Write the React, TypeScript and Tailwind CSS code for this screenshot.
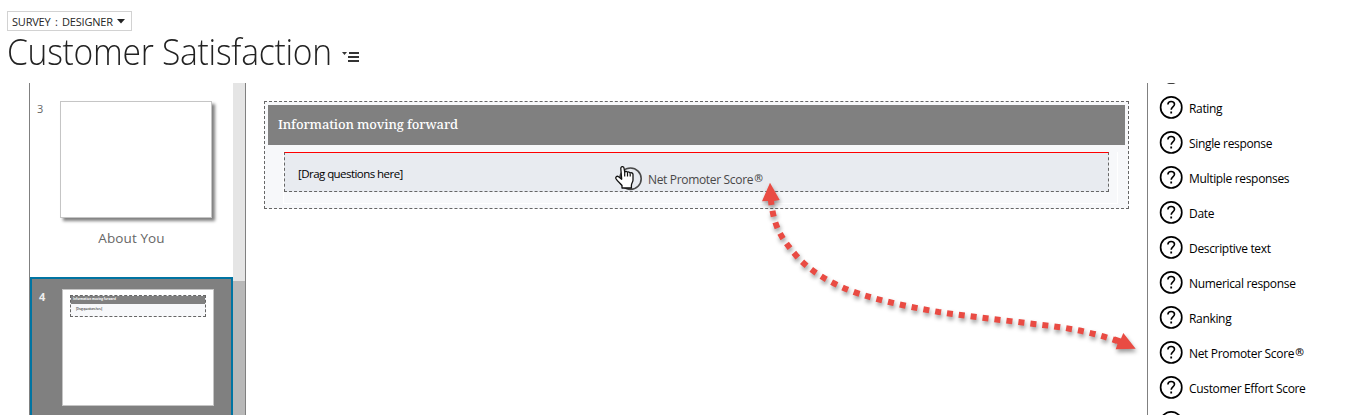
const questionTypes = [
  { name: 'Rating' },
  { name: 'Single response' },
  { name: 'Multiple responses' },
  { name: 'Date' },
  { name: 'Descriptive text' },
  { name: 'Numerical response' },
  { name: 'Ranking' },
  { name: 'Net Promoter Score', registered: true },
  { name: 'Customer Effort Score' },
];

function QuestionIcon() {
  return (
    <svg width="24" height="24" viewBox="0 0 24 24" fill="none" stroke="#000" className="shrink-0">
      <circle cx="12.2" cy="12.4" r="10.6" strokeWidth="1.7" />
      <path d="M8.900 9.500C9 7.500 10.200 6.500 12.100 6.500c2 0 3.400 1.100 3.400 2.800 0 2.500-3.300 2.800-3.300 5.400" strokeWidth="1.6" />
      <path d="M12.200 16.500v2" strokeWidth="1.8" />
    </svg>
  );
}

function Registered() {
  return <span className="relative -top-[1.5px] ml-[1px] text-[10.5px] leading-none font-semibold">®</span>;
}

function Header() {
  return (
    <header className="h-[83px] shrink-0 pl-[7px] pt-[11px]">
      <button className="flex h-5 w-[125px] items-center border border-[#d2d2d2] pl-[4px] text-[11px] text-[#262626]">
        <span className="mt-[2px] whitespace-nowrap tracking-[-0.2px] [word-spacing:1.8px]">SURVEY : DESIGNER</span>
        <svg width="8" height="5" viewBox="0 0 8 5" className="ml-[4px]">
          <path d="M0 0h8L4 4.5z" fill="#222" />
        </svg>
      </button>
      <div className="flex h-[42px] items-center">
        <h1 className="w-[324px] origin-left scale-x-[0.935] whitespace-nowrap text-[36px] leading-[42px] font-light tracking-[-0.3px] text-[#222]">
          Customer Satisfaction
        </h1>
        <svg width="17" height="11" viewBox="0 0 17 11" className="ml-[11px] mt-[10px]">
          <path d="M0 0h5L2.5 3z" fill="#333" />
          <path d="M7 0h10v2H7zM6 4h11v2H6zM6 8h11v2H6z" fill="#333" />
        </svg>
      </div>
    </header>
  );
}

function PageList() {
  return (
    <aside className="ml-[29px] flex w-[217px] shrink-0 border-x border-[#808080]">
      <div className="w-[203px] shrink-0">
        <div className="h-[194px] pt-[18px]">
          <div className="flex">
            <span className="w-[30px] pl-[7px] pt-[1px] text-[11px] leading-[14px] text-[#666]">3</span>
            <div className="h-[117px] w-[152px] border border-[#c5c5c5] bg-white shadow-[3px_3px_3px_#808080]" />
          </div>
          <p className="pt-[10px] text-center text-[13.5px] leading-[20px] tracking-[0.1px] text-[#666]">About You</p>
        </div>
        <div className="flex h-[160px] border-2 border-[#0074a2] bg-[#808080] pt-[10px]">
          <span className="w-[30px] pl-[7px] pt-[1px] text-[11px] leading-[14px] font-bold text-[#eee]">4</span>
          <div className="h-[117px] w-[152px] border border-[#c5c5c5] bg-white p-[7px] pt-[5px]">
            <div className="h-[22px] border border-dashed border-[#666] bg-[#f7f8fa] text-[3px]">
              <div className="h-[8px] bg-[#808080] pl-[2px] leading-[7px] font-bold text-white">Information moving forward</div>
              <div className="pl-[5px] pt-[2px] leading-[7px] tracking-[-0.2px] text-black">[Drag questions here]</div>
            </div>
          </div>
        </div>
      </div>
      <div className="h-full w-[12px] bg-[#e5e5e5] pt-[198px]">
        <div className="h-[134px] bg-[#b8b8b8]" />
      </div>
    </aside>
  );
}

function DraggedQuestion() {
  return (
    <div className="absolute left-[330px] top-[13px] flex items-center text-[#484848]">
      <div className="relative h-6 w-7">
        <svg width="28" height="26" viewBox="0 0 28 26">
          <circle cx="15.500" cy="12.700" r="10.700" fill="none" stroke="#484848" strokeWidth="1.600" />
          <path
            d="M5.800 2.500C5.800 0 8.900 0 9.100 2.500l.6 3.500c.8-.9 2.300-.7 2.700.3 1-.6 2.200-.4 2.600.7 1.300-.6 2.900 0 3 1.500v5.500c0 2-1.600 3-1.600 5.500v2.500H7v-2.500C5.500 17.500 2.500 15.500 1 12.800c-.8-1.800.8-3.200 2.600-2.100l3.100 2.500z"
            fill="#fff"
            stroke="#111"
            strokeWidth="1.300"
            strokeLinejoin="round"
          />
          <path d="M9.700 6v4.500M12.500 6.500v4M15.200 7.500v3" stroke="#111" strokeWidth="1.200" />
        </svg>
      </div>
      <span className="mt-[3px] ml-[5px] whitespace-nowrap text-[12px] leading-4 tracking-[-0.33px]">
        Net Promoter Score
        <Registered />
      </span>
    </div>
  );
}

function Canvas() {
  return (
    <main className="min-w-0 flex-1 pl-[18px] pr-[18px] pt-[18px]">
      <section className="h-[108px] border border-dashed border-[#666] bg-[#f7f8fa] p-[3px]">
        <h2 className="h-10 bg-[#808080] pl-[10px] font-['Noto_Serif','Liberation_Serif',serif] text-[13px] leading-[39px] font-medium tracking-[-0.13px] text-white">
          Information moving forward
        </h2>
        <div className="mr-[7px] ml-[15px] mt-[7px] h-[52px] border border-t-0 border-white">
          <div className="relative h-10 w-[825px] border border-dashed border-[#666] border-t-[#f00] bg-[#e8ebf0] pt-[12px] pl-[13px] text-[11.500px] leading-[18px] tracking-[-0.55px] text-black [border-top-style:solid]">
            [Drag questions here]
            <DraggedQuestion />
          </div>
        </div>
      </section>
    </main>
  );
}

function QuestionTypes() {
  return (
    <aside className="w-[203px] shrink-0 overflow-hidden border-l border-[#808080] pl-[11px]">
      <div className="-mt-[23px] flex flex-col gap-[11px]">
        <QuestionIcon />
        {questionTypes.map((type) => (
          <div key={type.name} className="flex h-6 items-center gap-[6px]">
            <QuestionIcon />
            <span className="mt-[3px] whitespace-nowrap text-[12px] leading-4 tracking-[-0.33px] text-black">
              {type.name}
              {type.registered && <Registered />}
            </span>
          </div>
        ))}
        <QuestionIcon />
      </div>
    </aside>
  );
}

function DragArrow() {
  return (
    <svg
      width="1350"
      height="415"
      viewBox="0 0 1350 415"
      className="pointer-events-none absolute left-0 top-0 drop-shadow-[1px_3px_2px_rgba(0,0,0,0.4)]"
    >
      <path
        d="M772.500 210.700C776 231 784 241 796.300 255.700C815 277 845 290 868.700 296.700C891 303 915 308 938.700 312C970 316.500 1002 320 1034 324C1062 327 1090 331 1117 341"
        fill="none"
        stroke="#e94b43"
        strokeWidth="6"
        strokeDasharray="6 6"
      />
      <path d="M770 182.700L779.700 200L774 201L774.500 204.500L768.500 205.500L768 201L762 201.300z" fill="#e94b43" />
      <path d="M1135.700 348.700L1115.700 349.300L1117.500 344L1113 342L1115 336.500L1121 338.500L1123.300 333z" fill="#e94b43" />
    </svg>
  );
}

export default function App() {
  return (
    <div className="relative flex h-[415px] w-[1350px] flex-col overflow-hidden bg-white font-['Open_Sans','Noto_Sans',sans-serif]">
      <Header />
      <div className="flex h-[332px]">
        <PageList />
        <Canvas />
        <QuestionTypes />
      </div>
      <DragArrow />
    </div>
  );
}
